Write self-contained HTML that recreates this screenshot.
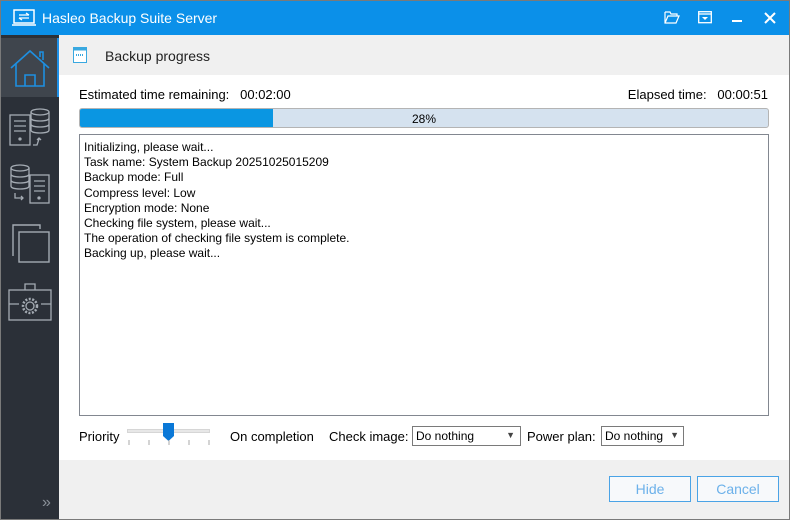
<!DOCTYPE html><html><head><style>
*{margin:0;padding:0;box-sizing:border-box}
body{width:790px;height:520px;overflow:hidden;font-family:"Liberation Sans",sans-serif;font-size:12px;color:#000;position:relative;background:#fff}
.abs{position:absolute}
</style></head><body>
<div class="abs" style="left:0;top:0;width:790px;height:520px;border:1px solid #7a7a7a"></div>
<div class="abs" style="left:1px;top:1px;width:788px;height:34px;background:#0b90e9"></div>
<svg class="abs" style="left:12px;top:9px" width="24" height="18" viewBox="0 0 24 18"><rect x="2" y="1" width="20" height="13" fill="none" stroke="#fff" stroke-width="1.5"/><line x1="0" y1="16" x2="24" y2="16" stroke="#fff" stroke-width="1.5"/><path d="M7 6h10M14 4l3 2M17 9H7M10 11l-3-2" stroke="#fff" stroke-width="1.3" fill="none"/></svg>
<div class="abs" style="left:42px;top:10px;color:#fff;font-size:14px">Hasleo Backup Suite Server</div>
<svg class="abs" style="left:664px;top:11px" width="16" height="13" viewBox="0 0 16 13"><path d="M1 1h5l1 2h6v2M1 1v11h11l3-7H4l-3 7" fill="none" stroke="#fff" stroke-width="1.2"/></svg>
<svg class="abs" style="left:698px;top:11px" width="14" height="13" viewBox="0 0 14 13"><rect x="0.7" y="0.7" width="12.6" height="11" fill="none" stroke="#fff" stroke-width="1.3"/><line x1="1" y1="3" x2="13" y2="3" stroke="#fff" stroke-width="1.3"/><path d="M4 6h6l-3 3z" fill="#fff"/></svg>
<div class="abs" style="left:732px;top:20px;width:10px;height:2px;background:#fff"></div>
<svg class="abs" style="left:764px;top:12px" width="12" height="12"><path d="M1 1l10 10M11 1L1 11" stroke="#fff" stroke-width="2"/></svg>
<div class="abs" style="left:1px;top:35px;width:58px;height:484px;background:#2b3038"></div>
<div class="abs" style="left:1px;top:38px;width:56px;height:59px;background:#3f454d"></div>
<div class="abs" style="left:57px;top:38px;width:2px;height:59px;background:#1e90e8"></div>
<svg class="abs" style="left:9px;top:48px" width="42" height="42" viewBox="0 0 42 42"><path d="M2 20L21 3l19 17M7 16v22h28V16M16 38V27h10v11M31 9V4h3v8" fill="none" stroke="#1e8fe0" stroke-width="1.6"/></svg>
<svg class="abs" style="left:9px;top:107px" width="42" height="42" viewBox="0 0 42 42" fill="none" stroke="#a4abb3" stroke-width="1.3"><rect x="1" y="8" width="20" height="30"/><path d="M5 14h12M5 19h12M5 24h12"/><circle cx="11" cy="32" r="1" fill="#a4abb3"/><ellipse cx="31" cy="5" rx="9" ry="3"/><path d="M22 5v18c0 2 4 3 9 3s9-1 9-3V5M22 11c0 2 4 3 9 3s9-1 9-3M22 17c0 2 4 3 9 3s9-1 9-3M24 38h4l2-6m-2 1l2-2 2 2"/></svg>
<svg class="abs" style="left:9px;top:163px" width="42" height="42" viewBox="0 0 42 42" fill="none" stroke="#a4abb3" stroke-width="1.3"><ellipse cx="11" cy="5" rx="9" ry="3"/><path d="M2 5v18c0 2 4 3 9 3s9-1 9-3V5M2 11c0 2 4 3 9 3s9-1 9-3M2 17c0 2 4 3 9 3s9-1 9-3"/><rect x="21" y="12" width="19" height="28"/><path d="M25 18h11M25 23h11M25 28h11M6 30v5h8m-2-2l2 2-2 2"/><circle cx="30" cy="35" r="1" fill="#a4abb3"/></svg>
<svg class="abs" style="left:9px;top:222px" width="42" height="42" viewBox="0 0 42 42" fill="none" stroke="#a4abb3" stroke-width="1.4"><path d="M4 34V3h27v4"/><rect x="10" y="10" width="30" height="30"/></svg>
<svg class="abs" style="left:8px;top:282px" width="44" height="40" viewBox="0 0 44 40" fill="none" stroke="#a4abb3" stroke-width="1.3"><rect x="1" y="8" width="42" height="30"/><path d="M17 8V2h10v6M1 22h10M33 22h10"/><circle cx="22" cy="24" r="7" stroke-dasharray="2 1.5" stroke-width="2.5"/><circle cx="22" cy="24" r="4"/></svg>
<div class="abs" style="left:42px;top:494px;color:#8a9098;font-size:16px">»</div>
<div class="abs" style="left:59px;top:35px;width:730px;height:40px;background:#f0f0f0"></div>
<svg class="abs" style="left:73px;top:47px" width="14" height="16" viewBox="0 0 14 16"><rect x="0.5" y="0.5" width="13" height="15" fill="#fff" stroke="#39a8e0"/><rect x="0.5" y="0.5" width="13" height="3" fill="#39a8e0"/><path d="M3 8h8" stroke="#39a8e0" stroke-width="2" stroke-dasharray="1 1"/></svg>
<div class="abs" style="left:105px;top:48px;font-size:14px;color:#222">Backup progress</div>
<div class="abs" style="left:79px;top:87px;font-size:13px">Estimated time remaining:&nbsp;&nbsp; 00:02:00</div>
<div class="abs" style="right:22px;top:87px;font-size:13px">Elapsed time:&nbsp;&nbsp; 00:00:51</div>
<div class="abs" style="left:79px;top:108px;width:690px;height:20px;border:1px solid #b4b4b4;background:#d5e2ef;border-radius:3px;overflow:hidden"><div style="width:193px;height:100%;background:#0a96e2"></div><div class="abs" style="left:0;top:3px;width:100%;text-align:center;font-size:12px">28%</div></div>
<div class="abs" style="left:79px;top:134px;width:690px;height:282px;border:1px solid #828790;padding:5px 4px;font-size:12px;line-height:15.2px">Initializing, please wait...<br>Task name: System Backup 20251025015209<br>Backup mode: Full<br>Compress level: Low<br>Encryption mode: None<br>Checking file system, please wait...<br>The operation of checking file system is complete.<br>Backing up, please wait...</div>
<div class="abs" style="left:79px;top:429px;font-size:13px">Priority</div>
<div class="abs" style="left:127px;top:429px;width:83px;height:4px;background:#e7e7e7;border:1px solid #d6d6d6"></div>
<svg class="abs" style="left:162px;top:422px" width="13" height="20"><path d="M1 1h11v13l-5.5 5L1 14z" fill="#0a78d7"/></svg>
<svg class="abs" style="left:127px;top:440px" width="85" height="6"><path d="M2 0v5M22 0v5M42 0v5M62 0v5M82 0v5" stroke="#aaa"/></svg>
<div class="abs" style="left:230px;top:429px;font-size:13px">On completion</div>
<div class="abs" style="left:329px;top:429px;font-size:13px">Check image:</div>
<div class="abs" style="left:412px;top:426px;width:109px;height:20px;border:1px solid #7a7a7a;font-size:12px;padding:2px 3px">Do nothing<span class="abs" style="right:5px;top:3px;font-size:9px;color:#444">▼</span></div>
<div class="abs" style="left:527px;top:429px;font-size:13px">Power plan:</div>
<div class="abs" style="left:601px;top:426px;width:83px;height:20px;border:1px solid #7a7a7a;font-size:12px;padding:2px 3px;overflow:hidden;white-space:nowrap">Do nothing<span class="abs" style="right:4px;top:3px;font-size:9px;color:#444;background:#fff">▼</span></div>
<div class="abs" style="left:59px;top:460px;width:730px;height:59px;background:#f0f0f0"></div>
<div class="abs" style="left:609px;top:476px;width:82px;height:26px;border:1px solid #4aa3e6;background:#f7f9fb;color:#6cb1ea;font-size:14px;text-align:center;line-height:24px">Hide</div>
<div class="abs" style="left:697px;top:476px;width:82px;height:26px;border:1px solid #4aa3e6;background:#f7f9fb;color:#6cb1ea;font-size:14px;text-align:center;line-height:24px">Cancel</div>
</body></html>
